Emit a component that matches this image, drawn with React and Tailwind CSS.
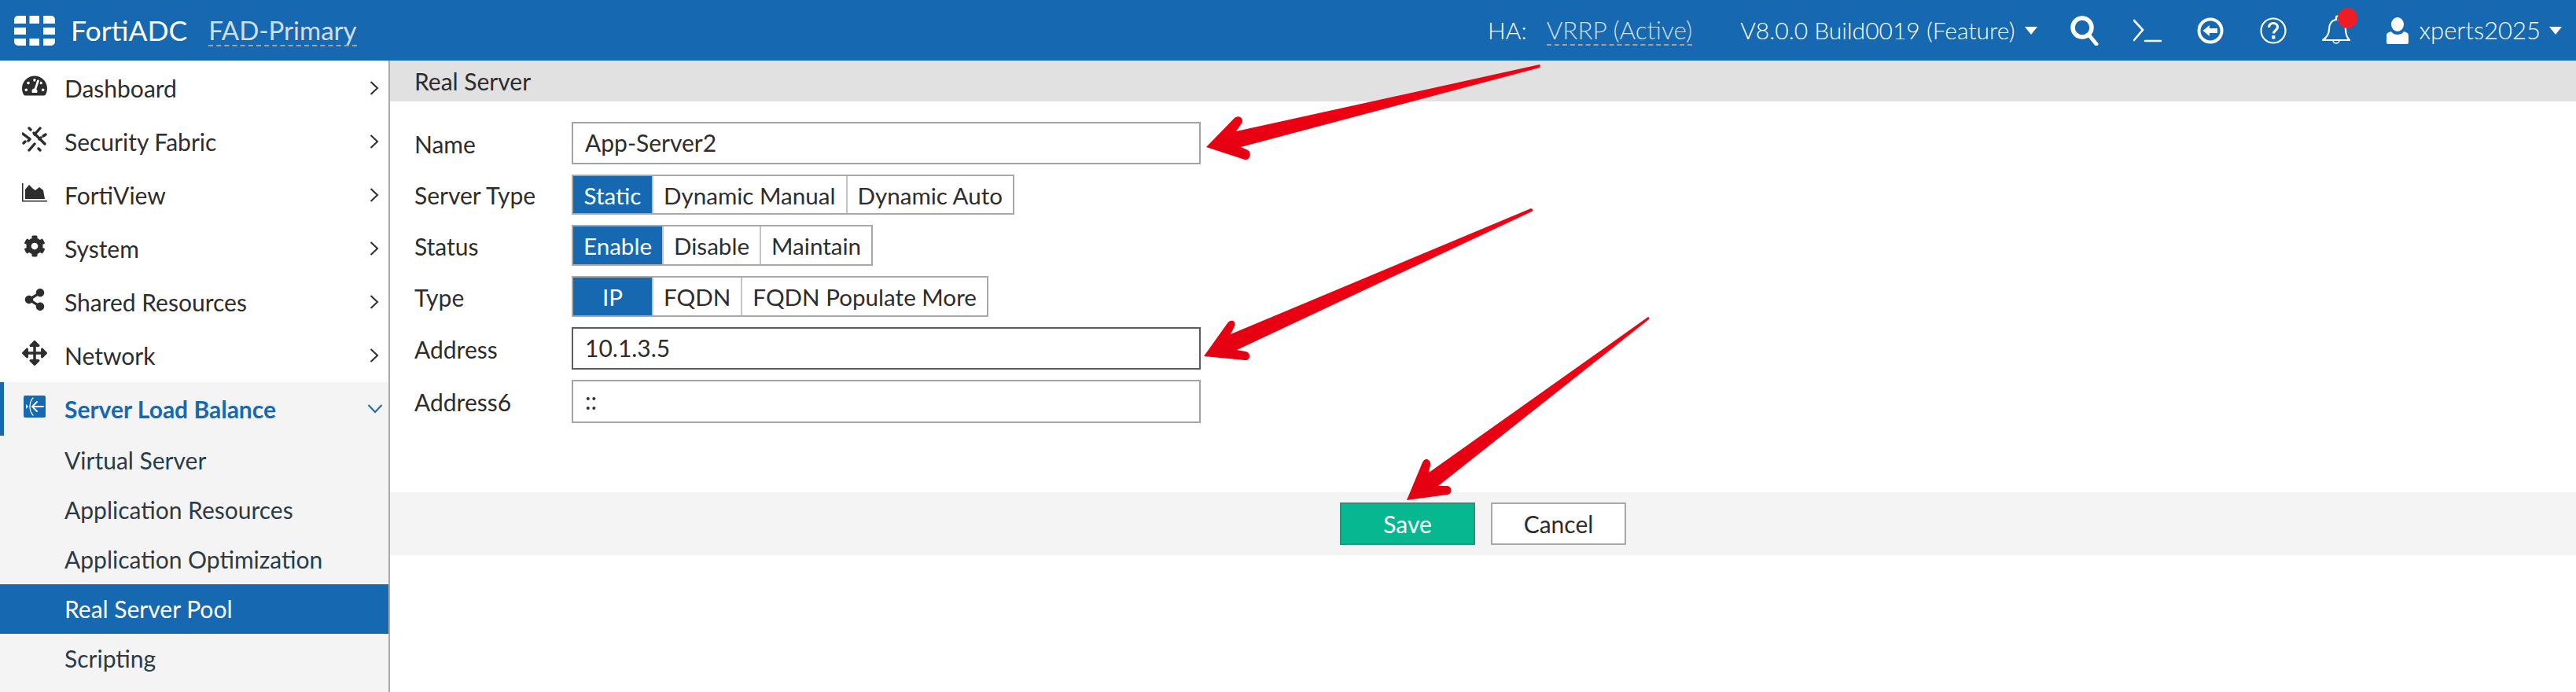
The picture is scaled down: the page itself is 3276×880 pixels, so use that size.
import { FaTachometerAlt, FaCog, FaShareAlt, FaArrowsAlt } from 'react-icons/fa'

const navItems = [
  { label: 'Dashboard', icon: <FaTachometerAlt size={32} /> },
  { label: 'Security Fabric', icon: <FabricIcon /> },
  { label: 'FortiView', icon: <AreaIcon /> },
  { label: 'System', icon: <FaCog size={28} /> },
  { label: 'Shared Resources', icon: <FaShareAlt size={28} /> },
  { label: 'Network', icon: <FaArrowsAlt size={32} /> },
]

const subItems = ['Virtual Server', 'Application Resources', 'Application Optimization', 'Real Server Pool', 'Scripting']

function Logo() {
  return (
    <svg width="52" height="38" viewBox="0 0 52 38" fill="white">
      <path d="M0 10V5a5 5 0 0 1 5-5h10v10z" />
      <rect x="19.5" y="0" width="12.5" height="10" />
      <path d="M37 0h10a5 5 0 0 1 5 5v5H37z" />
      <rect x="0" y="15" width="15" height="9" />
      <rect x="37" y="15" width="15" height="9" />
      <path d="M0 29h15v9H5a5 5 0 0 1-5-5z" />
      <rect x="19.5" y="29" width="12.5" height="9" />
      <path d="M37 29h15v4a5 5 0 0 1-5 5H37z" />
    </svg>
  )
}

function FabricIcon() {
  return (
    <svg width="32" height="32" viewBox="0 0 32 32" stroke="#2d2d2d" strokeWidth="3.4" strokeLinecap="round" fill="none">
      <path d="M23 2 16 10 M10 16 8 18 M24 14 22 16 M16 22 9 30" />
      <path d="M9 2 11 4 M1 9 9 15 M15 8 29 22 M2 21 4 19 M30 10 27 12 M21 28 23 30" />
    </svg>
  )
}

function AreaIcon() {
  return (
    <svg width="32" height="24" viewBox="0 0 32 24" fill="#2d2d2d">
      <path d="M0 0h1.5v22H32v1.6H0z" />
      <path d="M4 20V8l5-6 5 5 3 2 5-4 5 4 2 11z" />
    </svg>
  )
}

function SlbIcon() {
  return (
    <div className="grid h-[28px] w-[28px] place-items-center rounded-[2px] bg-[#1669b0]">
      <svg width="26" height="26" viewBox="0 0 26 26" fill="none" stroke="white" strokeWidth="1.8" strokeLinecap="round">
        <path d="M11 13H24 M16 7 10 13l6 6" />
        <path d="M11 2C8 5 7 9 7 13s1 8 4 11" strokeWidth="1.2" />
        <path d="M2 10l3 3-3 3z" fill="white" stroke="none" />
      </svg>
    </div>
  )
}

function Chevron() {
  return (
    <svg width="12" height="18" viewBox="0 0 12 18" fill="none" stroke="#2d2d2d" strokeWidth="2">
      <path d="M1.5 1 10 9l-8.5 8" />
    </svg>
  )
}

function Caret() {
  return (
    <svg width="16" height="10" viewBox="0 0 16 10" fill="white">
      <path d="M0 0h16L8 10z" />
    </svg>
  )
}

function SearchIcon() {
  return (
    <svg width="36" height="38" viewBox="0 0 36 38" fill="none" stroke="white" strokeLinecap="round">
      <circle cx="15" cy="15" r="12" strokeWidth="5.5" />
      <path d="M24 25 33 36" strokeWidth="5" />
    </svg>
  )
}

function TermIcon() {
  return (
    <svg width="36" height="30" viewBox="0 0 36 30" fill="none" stroke="white" strokeWidth="2.6" strokeLinecap="round">
      <path d="M1 2 12 14 1 27 M15 28H35" />
    </svg>
  )
}

function BackIcon() {
  return (
    <svg width="34" height="34" viewBox="0 0 34 34">
      <circle cx="17" cy="17" r="14.5" fill="none" stroke="white" strokeWidth="4" />
      <path d="M7.5 17 16 10v4h10v6H16v4z" fill="white" />
    </svg>
  )
}

function HelpIcon() {
  return (
    <svg width="34" height="34" viewBox="0 0 34 34" fill="none" stroke="white">
      <circle cx="17" cy="17" r="15.5" strokeWidth="2.2" />
      <path d="M11.5 13c0-3.5 2.500-5.500 5.500-5.500s5.500 2 5.500 5c0 4-5 4-5 8" strokeWidth="3.2" />
      <rect x="15.300" y="23" width="4" height="4.500" fill="white" stroke="none" />
    </svg>
  )
}

function BellIcon() {
  return (
    <svg width="36" height="40" viewBox="0 0 36 40" fill="none" stroke="white" strokeWidth="2.2" strokeLinecap="round" strokeLinejoin="round">
      <path d="M1 32h34c-4-4-5-9-5-14 0-6-4-10-9-11V3c0-2-3-2-3 0v3c-6 1-9 6-9 12 0 5-2 10-8 14z" />
      <path d="M14 32a4 4 0 1 0 8 0" strokeWidth="1.6" />
    </svg>
  )
}

function UserIcon() {
  return (
    <svg width="28" height="34" viewBox="0 0 28 34" fill="white">
      <ellipse cx="14" cy="9" rx="8" ry="9" />
      <path d="M0 32V23c0-3 3-4 6-5 2 3 5 4 8 4s6-1 8-4c3 1 6 2 6 5v9c0 1-1 2-2 2H2c-1 0-2-1-2-2z" />
    </svg>
  )
}

function Header() {
  return (
    <header className="flex h-[77px] shrink-0 items-center bg-[#1669b0] pr-[18px] pl-[18px] text-white">
      <div className="flex w-[52px] shrink-0">
        <Logo />
      </div>
      <span className="ml-[20px] text-[35.5px] leading-none">FortiADC</span>
      <span className="ml-[27px] border-b-2 border-dashed border-[#a3a3a3] text-[33px] leading-[38px] text-[#cfdff1]">FAD-Primary</span>
      <div className="ml-auto flex items-center text-[30px] font-light">
        <span>HA:</span>
        <span className="ml-[25px] border-b-2 border-dashed border-[#a3a3a3] text-[31.5px] leading-[36px] text-[#cfdff1]">VRRP (Active)</span>
        <span className="ml-[61px]">V8.0.0 Build0019 (Feature)</span>
        <span className="ml-[12px]"><Caret /></span>
        <span className="ml-[42px]"><SearchIcon /></span>
        <span className="ml-[44px]"><TermIcon /></span>
        <span className="ml-[45px]"><BackIcon /></span>
        <span className="ml-[46px]"><HelpIcon /></span>
        <span className="relative ml-[45px]">
          <BellIcon />
          <span className="absolute top-[-9px] left-[20px] h-[26px] w-[25px] rounded-full bg-[#ee1c25]" />
        </span>
        <span className="ml-[46px]"><UserIcon /></span>
        <span className="ml-[14px] text-[31px]">xperts2025</span>
        <span className="ml-[11px]"><Caret /></span>
      </div>
    </header>
  )
}

function Sidebar() {
  return (
    <aside className="flex w-[496px] shrink-0 flex-col border-r-2 border-[#aaaaaa] pt-px text-[#2d2d2d]">
      {navItems.map((item) => (
        <div key={item.label} className="flex h-[68px] items-center text-[30px]">
          <div className="ml-[28px] flex h-[40px] w-[32px] -translate-y-[3px] items-center justify-center">{item.icon}</div>
          <span className="ml-[22px]">{item.label}</span>
          <span className="mr-[12px] ml-auto"><Chevron /></span>
        </div>
      ))}
      <div className="flex-1 bg-[#f4f4f4]">
        <div className="flex h-[68px] items-center border-l-[5px] border-[#1669b0] text-[30px] font-bold text-[#1669b0]">
          <div className="ml-[25px] flex h-[40px] w-[28px] -translate-y-[3px] items-center justify-center"><SlbIcon /></div>
          <span className="ml-[24px]">Server Load Balance</span>
          <svg className="mr-[7px] ml-auto" width="20" height="12" viewBox="0 0 20 12" fill="none" stroke="#1669b0" strokeWidth="2">
            <path d="M1.500 1 10 10l8.500-9" />
          </svg>
        </div>
        {subItems.map((name) => (
          <div
            key={name}
            className={`flex h-[63px] items-center pl-[82px] text-[30px] ${name === 'Real Server Pool' ? 'bg-[#1669b0] text-white' : 'text-[#2c3a47]'}`}
          >
            {name}
          </div>
        ))}
      </div>
    </aside>
  )
}

function TextField({ value, focused }) {
  return (
    <div className={`flex h-full w-[800px] items-center border-2 pb-[2px] pl-[15px] ${focused ? 'border-[#5c5c5c]' : 'border-[#a3a3a3]'}`}>
      {value}
    </div>
  )
}

function Segmented({ options, first }) {
  return (
    <div className="flex h-full w-fit border-2 border-[#a8a8a8] text-[29.6px]">
      {options.map((opt, i) => (
        <div
          key={opt}
          className={
            i === 0
              ? `flex items-center justify-center bg-[#1669b0] pt-[3px] text-white ${first}`
              : 'flex items-center border-l-2 border-[#c4c4c4] px-[13px] pt-[3px] text-[#2d2d2d]'
          }
        >
          {opt}
        </div>
      ))}
    </div>
  )
}

function Row({ label, h, children }) {
  return (
    <div className={`flex items-center ${h}`}>
      <div className="w-[200px] shrink-0 pt-[2px]">{label}</div>
      {children}
    </div>
  )
}

function Form() {
  return (
    <main className="flex min-w-0 flex-1 flex-col text-[#2d2d2d]">
      <div className="flex h-[52px] items-center bg-[#e1e1e1] pl-[31px] text-[30px]">Real Server</div>
      <div className="flex h-[497px] flex-col gap-[13px] pt-[26px] pl-[31px] text-[30px]">
        <Row label="Name" h="h-[54px]"><TextField value="App-Server2" /></Row>
        <Row label="Server Type" h="h-[51px]"><Segmented options={['Static', 'Dynamic Manual', 'Dynamic Auto']} first="w-[100px]" /></Row>
        <Row label="Status" h="h-[52px]"><Segmented options={['Enable', 'Disable', 'Maintain']} first="w-[113px]" /></Row>
        <Row label="Type" h="h-[52px]"><Segmented options={['IP', 'FQDN', 'FQDN Populate More']} first="w-[100px]" /></Row>
        <Row label="Address" h="h-[54px]"><TextField value="10.1.3.5" focused /></Row>
        <Row label="Address6" h="h-[55px]"><TextField value="::" /></Row>
      </div>
      <div className="flex h-[80px] items-center justify-center gap-[20px] bg-[#f4f4f4] text-[30px]">
        <button className="h-[54px] w-[172px] border-2 border-[#2b9478] bg-[#07b78f] text-white">Save</button>
        <button className="h-[54px] w-[172px] border-2 border-[#a8a8a8] bg-white">Cancel</button>
      </div>
    </main>
  )
}

function Arrows() {
  return (
    <svg className="pointer-events-none absolute top-0 left-0" width="3276" height="880" viewBox="0 0 3276 880">
      <defs>
        <linearGradient id="arrowRed" x1="0" y1="0" x2="0.4" y2="1">
          <stop offset="0" stopColor="#ff0013" />
          <stop offset="1" stopColor="#df0012" />
        </linearGradient>
      </defs>
      <g fill="url(#arrowRed)">
        <path d="M1958 82C1959 83 1959 85 1958 86L1578 187 1587 191C1592 194 1590 204 1583 203L1534 187 1569 151C1574 145 1583 150 1579 157L1572 167z" />
        <path d="M1947 265C1949 265 1950 268 1948 269L1573 445 1584 447C1591 448 1591 459 1583 458L1531 453 1561 411C1565 405 1573 408 1570 415L1565 425z" />
        <path d="M2096 403C2097 403 2098 405 2097 406L1829 618 1841 618C1847 619 1847 628 1841 629L1789 636 1809 588C1812 581 1820 584 1819 591L1817 601z" />
      </g>
    </svg>
  )
}

export default function App() {
  return (
    <div className="relative flex h-[880px] w-[3276px] flex-col overflow-hidden bg-white font-[Lato,sans-serif]">
      <Header />
      <div className="flex min-h-0 flex-1">
        <Sidebar />
        <Form />
      </div>
      <Arrows />
    </div>
  )
}
